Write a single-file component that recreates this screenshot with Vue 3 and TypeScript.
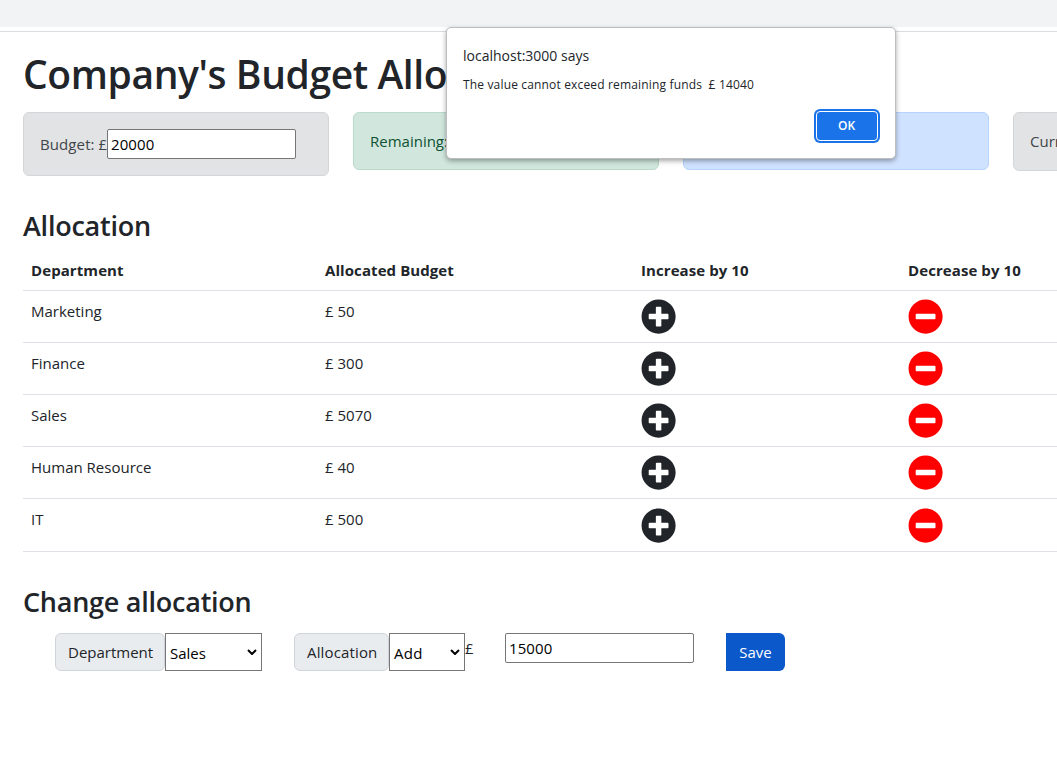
<script setup lang="ts">
import { ref } from 'vue'

interface Department {
  name: string
  cost: number
}

const currency = '£'
const budget = ref('20000')
const amount = ref('15000')
const department = ref('Sales')
const action = ref('Add')
const departments: Department[] = [
  { name: 'Marketing', cost: 50 },
  { name: 'Finance', cost: 300 },
  { name: 'Sales', cost: 5070 },
  { name: 'Human Resource', cost: 40 },
  { name: 'IT', cost: 500 },
]
</script>

<template>
  <div class="window">
    <div class="toolbar"></div>
    <main class="page">
      <h1><span>Company's Budget Allocation</span></h1>
      <section class="cards">
        <div class="card grey budget">
          <span class="budget-label">Budget: {{ currency }}</span>
          <input v-model="budget" class="field" type="text" />
        </div>
        <div class="card green"><span>Remaining: {{ currency }}14040</span></div>
        <div class="card blue"></div>
        <div class="card grey currency"><span>Currency</span></div>
      </section>

      <h3 class="allocation-title">Allocation</h3>
      <div class="table">
        <div class="row head">
          <div>Department</div>
          <div>Allocated Budget</div>
          <div>Increase by 10</div>
          <div>Decrease by 10</div>
        </div>
        <div v-for="d in departments" :key="d.name" class="row">
          <div>{{ d.name }}</div>
          <div>{{ currency }} {{ d.cost }}</div>
          <div>
            <svg class="icon plus" viewBox="0 0 512 512"><path d="M256 8C119 8 8 119 8 256s111 248 248 248 248-111 248-248S393 8 256 8zm144 276c0 6.600-5.400 12-12 12h-92v92c0 6.600-5.400 12-12 12h-56c-6.600 0-12-5.400-12-12v-92h-92c-6.600 0-12-5.400-12-12v-56c0-6.600 5.400-12 12-12h92v-92c0-6.600 5.400-12 12-12h56c6.600 0 12 5.400 12 12v92h92c6.600 0 12 5.400 12 12v56z" /></svg>
          </div>
          <div>
            <svg class="icon minus" viewBox="0 0 512 512"><path d="M256 8C119 8 8 119 8 256s111 248 248 248 248-111 248-248S393 8 256 8zM124 296c-6.600 0-12-5.400-12-12v-56c0-6.600 5.400-12 12-12h264c6.600 0 12 5.400 12 12v56c0 6.600-5.400 12-12 12H124z" /></svg>
          </div>
        </div>
      </div>

      <h3 class="change-title">Change allocation</h3>
      <form class="form" @submit.prevent>
        <label class="tag tag-department">Department</label>
        <div class="select select-department">
          <span>{{ department }}</span>
          <svg class="chevron" viewBox="0 0 10 6"><path d="M1 1l4 4 4-4" /></svg>
        </div>
        <label class="tag tag-allocation">Allocation</label>
        <div class="select select-action">
          <span>{{ action }}</span>
          <svg class="chevron" viewBox="0 0 10 6"><path d="M1 1l4 4 4-4" /></svg>
        </div>
        <span class="pound">{{ currency }}</span>
        <input v-model="amount" class="field amount" type="text" />
        <button class="save" type="submit">Save</button>
      </form>
    </main>

    <div class="dialog" role="alertdialog">
      <div class="dialog-title">localhost:3000 says</div>
      <div class="dialog-text">The value cannot exceed remaining funds&nbsp; {{ currency }} 14040</div>
      <button class="ok" type="button">OK</button>
    </div>
  </div>
</template>

<style>
body {
  margin: 0;
  background: #fff;
}
</style>

<style scoped>
* {
  box-sizing: border-box;
}
.window {
  position: relative;
  width: 1057px;
  height: 757px;
  overflow: hidden;
  background: #fff;
  color: #212529;
  font: 15px/24px 'Segoe UI', 'Open Sans', 'Noto Sans', sans-serif;
  white-space: nowrap;
}
.toolbar {
  height: 32px;
  border-bottom: 1px solid #dadce0;
  background: linear-gradient(#f1f3f4 27px, #fff 27px);
}
.page {
  padding: 18px 0 0 23px;
}
h1 {
  margin: 0;
  font-size: 39px;
  line-height: 48px;
  font-weight: 600;
  letter-spacing: -0.4px;
}
.cards {
  display: flex;
  align-items: flex-start;
  gap: 24px;
  height: 64px;
  margin-top: 14px;
}
.card {
  flex: 0 0 306px;
  height: 58px;
  padding: 16px;
  border: 1px solid;
  border-radius: 6px;
}
.grey {
  color: #41464b;
  background: #e2e3e5;
  border-color: #d3d6d8;
}
.green {
  color: #0f5132;
  background: #d1e7dd;
  border-color: #badbcc;
}
.blue {
  background: #cfe2ff;
  border-color: #b6d4fe;
}
.budget {
  display: flex;
  align-items: center;
  height: 64px;
}
.budget-label {
  width: 67px;
  letter-spacing: 0.1px;
}
.currency {
  height: 59px;
}
.field {
  width: 189px;
  height: 30px;
  margin: 0;
  padding: 1px 3px;
  border: 1px solid #767676;
  border-radius: 2px;
  outline: 0;
  background: #fff;
  color: #000;
  font: inherit;
  letter-spacing: 0.1px;
}
h3 {
  margin: 0;
  font-size: 27px;
  line-height: 34px;
  font-weight: 600;
  letter-spacing: -0.25px;
}
.allocation-title {
  margin-top: 33px;
}
.table {
  width: 1200px;
  margin-top: 7px;
}
.row {
  display: grid;
  grid-template-columns: 294px 316px 267px 1fr;
  height: 52.1px;
  border-bottom: 1px solid #dee2e6;
}
.row:last-child {
  height: 52.6px;
}
.row > div {
  padding: 8px;
}
.row.head {
  height: 41px;
  font-weight: 700;
  letter-spacing: 0.08px;
}
.icon {
  display: block;
  width: 35.2px;
  height: 35.2px;
}
.row:last-child .icon {
  margin-top: 0.3px;
}
.plus {
  fill: #212529;
}
.minus {
  fill: #f00;
}
.change-title {
  margin-top: 33px;
}
.form {
  display: flex;
  align-items: flex-start;
  height: 38px;
  margin: 14px 0 0 32px;
}
.tag {
  height: 38px;
  padding: 6px 12px;
  border: 1px solid #ced4da;
  border-radius: 6px;
  background: #e9ecef;
}
.tag-department {
  width: 110px;
}
.tag-allocation {
  width: 95px;
  margin-left: 32px;
  letter-spacing: 0.15px;
}
.select {
  display: flex;
  align-items: center;
  justify-content: space-between;
  height: 38px;
  padding: 2px 4px 0;
  border: 1px solid #767676;
  background: #fff;
  color: #000;
}
.select-department {
  width: 97px;
}
.select-action {
  width: 76px;
  letter-spacing: 0.3px;
}
.chevron {
  width: 10px;
  height: 6px;
  margin-top: -2px;
  fill: none;
  stroke: #000;
  stroke-width: 2;
}
.pound {
  width: 40px;
  padding-top: 3px;
}
.save {
  width: 59px;
  height: 38px;
  margin-left: 32px;
  padding: 0;
  border: 0;
  border-radius: 0 6px 6px 0;
  background: #0a58ca;
  color: #fff;
  font: inherit;
}
.dialog {
  position: absolute;
  left: 446px;
  top: 27px;
  width: 450px;
  height: 132px;
  padding: 18px 16px;
  border: 1px solid #bcbec0;
  border-radius: 5px;
  background: #fff;
  box-shadow: 0 2px 5px rgba(0, 0, 0, 0.35);
}
.dialog-title {
  font-size: 14px;
  line-height: 20px;
}
.dialog-text {
  margin-top: 10px;
  font-size: 12px;
  line-height: 18px;
  letter-spacing: 0.16px;
}
.ok {
  display: block;
  width: 62px;
  height: 30px;
  margin: 17px 1px 0 auto;
  padding: 0 1px 0 0;
  border: 1px solid #fff;
  border-radius: 4px;
  outline: 0;
  background: #1a73e8;
  box-shadow: 0 0 0 2px #1a73e8;
  color: #fff;
  font: 600 12px/20px 'Segoe UI', 'Open Sans', 'Noto Sans', sans-serif;
}
</style>
